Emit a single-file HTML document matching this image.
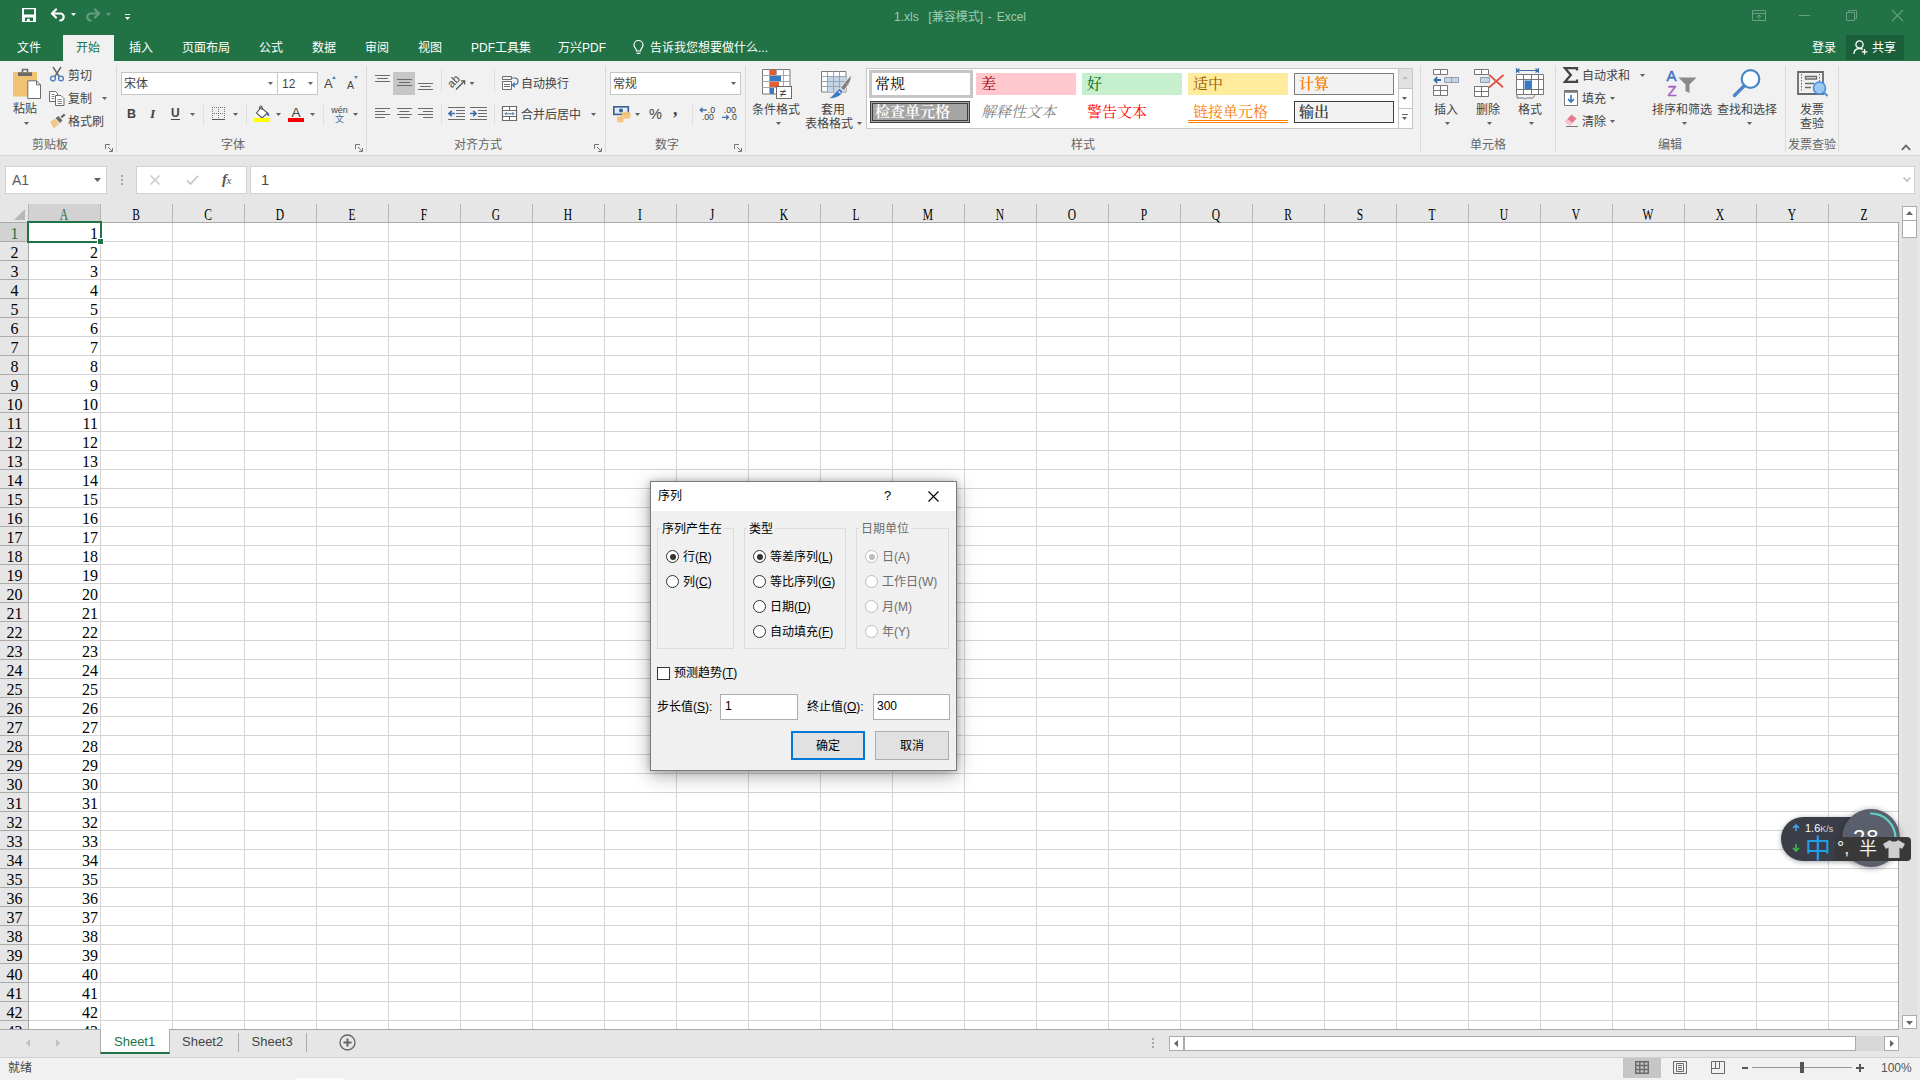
<!DOCTYPE html>
<html lang="zh-CN"><head><meta charset="utf-8"><title>1.xls [兼容模式] - Excel</title>
<style>
*{box-sizing:border-box;margin:0;padding:0}
html,body{width:1920px;height:1080px;overflow:hidden;background:#fff}
body{position:relative;font-family:"Liberation Sans","Noto Sans CJK SC",sans-serif;font-size:12px;color:#444;line-height:1}
.a{position:absolute}
.t{position:absolute;white-space:nowrap;line-height:16px;height:16px}
.c{text-align:center}
.r{line-height:18px;height:18px}
svg{position:absolute;overflow:visible}
#title{left:0;top:0;width:1920px;height:60.500px;background:#217346;z-index:1}
#ribbon{left:0;top:60px;width:1920px;height:96px;background:#f1f1f1;border-bottom:1px solid #d5d5d5}
#fbar{left:0;top:156px;width:1920px;height:48px;background:#e6e6e6}
.tab{color:#fff;top:39.500px}
.gl{color:#666;top:136px}
.sep{position:absolute;top:66px;width:1px;height:86px;background:#dadada}
.sep2{position:absolute;width:1px;height:22px;background:#e0e0e0}
.dd{position:absolute;width:5px;height:3px;background:#606060;clip-path:polygon(0 0,100% 0,50% 100%)}
.ser{font-family:"Liberation Serif","Noto Serif CJK SC",serif}
.sty{position:absolute;height:22px;font-family:"Liberation Serif","Noto Serif CJK SC",serif;font-size:15px;line-height:22px;padding-left:5px;white-space:nowrap}
.rh{position:absolute;left:0;width:29px;height:19px;text-align:center;font:16px/21px "Liberation Serif","Noto Serif CJK SC",serif;color:#000}
.cv{position:absolute;left:30px;width:68px;height:19px;text-align:right;font:16px/21px "Liberation Serif","Noto Serif CJK SC",serif;color:#000}
.ch{position:absolute;top:204px;width:72px;height:18px;text-align:center;transform:scaleX(.72);font:16px/21px "Liberation Serif","Noto Serif CJK SC",serif;color:#000}
.vsep{position:absolute;top:204px;width:1px;height:18px;background:#b5b5b5}
#dlg{left:650px;top:481px;width:307px;height:290px;background:#f0f0f0;border:1px solid #7a7a7a;box-shadow:0 4px 18px rgba(0,0,0,.35),0 0 6px rgba(0,0,0,.2);color:#000}
#dlg .t{color:#000}
.gb{position:absolute;border:1px solid #dcdcdc;top:46px;height:121px}
.gt{position:absolute;top:39px;background:#f0f0f0;padding:0 2px;line-height:16px;height:16px;white-space:nowrap}
.rd{position:absolute;width:13px;height:13px;border-radius:50%;border:1px solid #333;background:#fff}
.rd.on::after{content:"";position:absolute;left:2.500px;top:2.500px;width:6px;height:6px;border-radius:50%;background:#333}
.rd.dis{border-color:#bcbcbc}
.rd.dis.on::after{background:#bcbcbc}
u{text-decoration:underline;text-underline-offset:1px}
</style></head><body>
<div class="a" id="title">
<!-- QAT icons -->
<svg style="left:22px;top:8px" width="14" height="14" viewBox="0 0 14 14"><path fill="#fff" fill-rule="evenodd" d="M0 0h14v14H0zM2 1.200v5.300h10V1.200zM3 9.500V13h8V9.500z"/><path fill="#fff" d="M5 10.800h2.800V13H5z"/></svg>
<svg style="left:50px;top:7px" width="16" height="15" viewBox="0 0 16 15" fill="none" stroke="#fff" stroke-width="2.200"><path d="M2.500 6.500H10.200A3.500 3.500 0 0 1 10.200 13.500" stroke-linecap="round"/><path d="M6 2.500L2 6.500 6 10.500" stroke-linecap="round" stroke-linejoin="round"/></svg>
<div class="dd" style="left:71px;top:13px;background:#fff"></div>
<svg style="left:85px;top:7px;opacity:.3" width="16" height="15" viewBox="0 0 16 15" fill="none" stroke="#fff" stroke-width="2.200"><path d="M13.500 6.500H5.800A3.500 3.500 0 0 0 5.800 13.500" stroke-linecap="round"/><path d="M10 2.500L14 6.500 10 10.500" stroke-linecap="round" stroke-linejoin="round"/></svg>
<div class="dd" style="left:106px;top:13px;background:#fff;opacity:.3"></div>
<div class="a" style="left:125px;top:14px;width:5px;height:1px;background:#fff"></div>
<div class="dd" style="left:125px;top:17px;background:#fff"></div>
<div class="t" style="left:894px;top:9px;color:#9fcbb0;word-spacing:1.500px">1.xls &nbsp;[兼容模式] - Excel</div>
<!-- window controls -->
<svg style="left:1752px;top:10px;opacity:.32" width="14" height="11" viewBox="0 0 14 11" fill="none" stroke="#fff" stroke-width="1"><path d="M.5.5h13v10H.5z"/><path d="M.5 3.500h13"/><path d="M7 5v4M5 7l2-2 2 2"/></svg>
<div class="a" style="left:1799px;top:15px;width:11px;height:1px;background:#fff;opacity:.32"></div>
<svg style="left:1846px;top:10px;opacity:.32" width="11" height="11" viewBox="0 0 11 11" fill="none" stroke="#fff" stroke-width="1"><path d="M.5 2.500h8v8h-8z"/><path d="M2.500 2.500v-2h8v8h-2"/></svg>
<svg style="left:1892px;top:10px;opacity:.32" width="11" height="11" viewBox="0 0 11 11" fill="none" stroke="#fff" stroke-width="1.1"><path d="M0 0l11 11M11 0L0 11"/></svg>
<!-- tabs -->
<div class="a" style="left:63px;top:35px;width:51px;height:27px;background:#f1f1f1"></div>
<div class="t tab" style="left:17px">文件</div>
<div class="t tab" style="left:76px;color:#217346">开始</div>
<div class="t tab" style="left:129px">插入</div>
<div class="t tab" style="left:182px">页面布局</div>
<div class="t tab" style="left:259px">公式</div>
<div class="t tab" style="left:312px">数据</div>
<div class="t tab" style="left:365px">审阅</div>
<div class="t tab" style="left:418px">视图</div>
<div class="t tab" style="left:471px">PDF工具集</div>
<div class="t tab" style="left:558px">万兴PDF</div>
<svg style="left:633px;top:40px" width="11" height="15" viewBox="0 0 11 15" fill="none" stroke="#fff" stroke-width="1.200"><path d="M3.500 11C3.500 8.500 1 7.800 1 5a4.500 4.500 0 0 1 9 0c0 2.800-2.500 3.500-2.500 6z"/><path d="M3.500 13.300h4"/></svg>
<div class="t tab" style="left:650px">告诉我您想要做什么...</div>
<div class="t tab" style="left:1812px">登录</div>
<div class="a" style="left:1846px;top:35px;width:58px;height:25px;background:#1a5f3a"></div>
<svg style="left:1853px;top:40px" width="15" height="15" viewBox="0 0 15 15" fill="none" stroke="#fff" stroke-width="1.3"><circle cx="6.500" cy="4.500" r="3.600"/><path d="M.8 14c.4-3.500 2.800-5.500 5.700-5.500 1.200 0 2.300.3 3.200.9"/><path d="M11.500 9v5.500M8.800 11.800h5.500"/></svg>
<div class="t tab" style="left:1872px">共享</div>
</div>
<div class="a" id="ribbon"></div>
<!-- ===== clipboard ===== -->
<svg style="left:12px;top:68px" width="30" height="32" viewBox="0 0 30 32"><rect x="1" y="4" width="24" height="24.500" fill="#f0c372"/><rect x="6" y="4.300" width="14" height="3.700" fill="#6b6b6b"/><path d="M10.500 4.500v-3h5v3" fill="none" stroke="#6b6b6b" stroke-width="1.600"/><path d="M15.800 12.800h8.700l4 4v13.700H15.800z" fill="#fff" stroke="#6b6b6b"/><path d="M24.500 12.800v4h4" fill="none" stroke="#6b6b6b"/></svg>
<div class="t r" style="left:13px;top:100px">粘贴</div>
<div class="dd" style="left:24px;top:122px"></div>
<svg style="left:49px;top:66px" width="16" height="16" viewBox="0 0 16 16" fill="none"><path d="M4 1l6.500 10M12 1L5.500 11" stroke="#6b6b6b" stroke-width="1.500"/><circle cx="4" cy="12.500" r="2.400" stroke="#4a7ebb" stroke-width="1.300"/><circle cx="12" cy="12.500" r="2.400" stroke="#4a7ebb" stroke-width="1.300"/></svg>
<div class="t r" style="left:68px;top:67px">剪切</div>
<svg style="left:49px;top:90px" width="16" height="16" viewBox="0 0 16 16" fill="#fff" stroke="#6b6b6b"><path d="M.500 1.500h6l2 2v8h-8z"/><path d="M2.500 4.500h3M2.500 6.500h3M2.500 8.500h3" stroke-width=".8"/><path d="M6.500 5.500h5.500l3 3v7h-8.500z"/><path d="M8.500 9.500h4.500M8.500 11.500h4.500M8.500 13.500h4.500" stroke-width=".8"/></svg>
<div class="t r" style="left:68px;top:90px">复制</div>
<div class="dd" style="left:102px;top:97px"></div>
<svg style="left:49px;top:113px" width="17" height="16" viewBox="0 0 17 16"><path d="M1 9l5-3.500 4.500 5L5 15.500z" fill="#f0c789"/><path d="M6.500 5l3-2 4 4.500-2.500 2.500z" fill="#6b6b6b"/><path d="M11.500 3.500l3.500-3 1.500 1.800-3.500 3z" fill="#6b6b6b"/></svg>
<div class="t r" style="left:68px;top:113px">格式刷</div>
<div class="t gl r" style="left:32px">剪贴板</div>
<svg style="left:105px;top:144px" width="8" height="8" viewBox="0 0 8 8" fill="none" stroke="#777" stroke-width="1"><path d="M.500 5V.500H5"/><path d="M3 3l4 4M7.500 4v3.500H4"/></svg>
<div class="sep" style="left:116px"></div>
<!-- ===== font ===== -->
<div class="a" style="left:121px;top:72px;width:157px;height:23px;background:#fff;border:1px solid #c6c6c6"></div>
<div class="t r" style="left:124px;top:75px">宋体</div>
<div class="dd" style="left:268px;top:82px"></div>
<div class="a" style="left:277px;top:72px;width:41px;height:23px;background:#fff;border:1px solid #c6c6c6"></div>
<div class="t r" style="left:282px;top:75px;font-size:12px">12</div>
<div class="dd" style="left:308px;top:82px"></div>
<div class="t r" style="left:324px;top:75px;font-size:13px">A</div>
<div class="a" style="left:332px;top:76px;width:0;height:0;border-left:2.500px solid transparent;border-right:2.500px solid transparent;border-bottom:3px solid #5b86b0"></div>
<div class="t r" style="left:347px;top:76px;font-size:10.500px">A</div>
<div class="a" style="left:354px;top:76px;width:0;height:0;border-left:2.500px solid transparent;border-right:2.500px solid transparent;border-top:3px solid #5b86b0"></div>
<div class="t r" style="left:127px;top:105px;font-size:12.500px;font-weight:bold">B</div>
<div class="t r" style="left:150px;top:105px;font-size:13.500px;font-style:italic;font-weight:bold;font-family:'Liberation Serif',serif">I</div>
<div class="t r" style="left:171px;top:104px;font-size:12px;font-weight:bold">U</div><div class="a" style="left:171px;top:119px;width:9px;height:1px;background:#444"></div>
<div class="dd" style="left:190px;top:113px"></div>
<div class="sep2" style="left:203px;top:103px"></div>
<svg style="left:212px;top:107px" width="13" height="14" viewBox="0 0 13 14" fill="none" stroke="#777" stroke-dasharray="1 1" shape-rendering="crispEdges"><path d="M0 .500h13M0 6.500h13M.500 0v12M6.500 0v12M12.500 0v12"/><path d="M0 12.500h13" stroke-dasharray="none" stroke="#555"/></svg>
<div class="dd" style="left:233px;top:113px"></div>
<div class="sep2" style="left:246px;top:103px"></div>
<svg style="left:254px;top:105px" width="17" height="18" viewBox="0 0 17 18" fill="none"><path d="M7 2.500l6.500 5.500-5.500 5L2.500 8z" fill="#fff" stroke="#555" stroke-width="1.100"/><path d="M5.500 5V2.200a1.300 1.300 0 0 1 2.600 0V5" stroke="#555"/><path d="M13.500 7c1.500 1.500 2 3 1.700 4.500-.8-.8-1.700-1.500-2.700-2z" fill="#3b5fa8"/><rect x="0" y="13" width="16" height="4" fill="#ffff00"/></svg>
<div class="dd" style="left:276px;top:113px"></div>
<div class="t r" style="left:288px;top:104px;font-size:13.500px;width:16px;text-align:center">A</div>
<div class="a" style="left:288px;top:118px;width:16px;height:4px;background:#f20000"></div>
<div class="dd" style="left:310px;top:113px"></div>
<div class="sep2" style="left:323px;top:103px"></div>
<div class="t c" style="left:329px;top:105px;width:21px;font-size:9px;line-height:10px;height:10px">wén</div>
<div class="t c" style="left:329px;top:114px;width:21px;font-size:9px;line-height:10px;height:10px;color:#3d6fa8">文</div>
<div class="dd" style="left:353px;top:113px"></div>
<div class="t gl r" style="left:221px">字体</div>
<svg style="left:355px;top:144px" width="8" height="8" viewBox="0 0 8 8" fill="none" stroke="#777" stroke-width="1"><path d="M.500 5V.500H5"/><path d="M3 3l4 4M7.500 4v3.500H4"/></svg>
<div class="sep" style="left:366px"></div>
<!-- ===== alignment ===== -->
<div class="a" style="left:393px;top:72px;width:22px;height:23px;background:#c6c6c6"></div>
<svg style="left:375px;top:74px" width="60" height="20" viewBox="0 0 60 20" stroke="#6b6b6b" fill="none"><path d="M0 1.500h15M2 4.500h11M0 7.500h15"/><path d="M22 5.500h15M24 8.500h11M22 11.500h15"/><path d="M43 9.500h15M45 12.500h11M43 15.500h15"/></svg>
<svg style="left:375px;top:107px" width="60" height="14" viewBox="0 0 60 14" stroke="#6b6b6b" fill="none"><path d="M0 1.500h15M0 4.500h10M0 7.500h15M0 10.500h10"/><path d="M22 1.500h15M24.500 4.500h10M22 7.500h15M24.500 10.500h10"/><path d="M43 1.500h15M48 4.500h10M43 7.500h15M48 10.500h10"/></svg>
<div class="sep2" style="left:441px;top:70px"></div>
<div class="sep2" style="left:441px;top:103px"></div>
<svg style="left:448px;top:75px" width="18" height="16" viewBox="0 0 18 16" fill="none"><text x="0" y="0" font-size="11.500" fill="#4a4a4a" transform="translate(3.700 13.600) rotate(-45)" font-family="Liberation Sans, sans-serif">ab</text><path d="M8 14.500L16.500 6M13 5.800h3.700v3.700" stroke="#555" stroke-width="1.200"/></svg>
<div class="dd" style="left:469.5px;top:82px"></div>
<svg style="left:448px;top:107px" width="40" height="14" viewBox="0 0 40 14" fill="none" stroke="#6b6b6b"><path d="M0 .500h17M8 3.500h9M8 6.500h9M8 9.500h9M0 12.500h17"/><path d="M1 6.500h6M3.800 3.800L1 6.500l2.800 2.700" stroke="#3d6fa8" stroke-width="1.700"/><path d="M22 .500h17M30 3.500h9M30 6.500h9M30 9.500h9M22 12.500h17"/><path d="M22 6.500h6M25.200 3.800L28 6.500l-2.800 2.700" stroke="#3d6fa8" stroke-width="1.700"/></svg>
<div class="sep2" style="left:494px;top:70px"></div>
<div class="sep2" style="left:494px;top:103px"></div>
<svg style="left:502px;top:75px" width="17" height="16" viewBox="0 0 17 16" fill="none" stroke="#6b6b6b"><path d="M.500 1.500h9v3h-9zM9.500 3h3"/><path d="M.500 6.500h9v8h-9zM2 9.500h6M2 11.500h6" fill="#fff"/><path d="M12.500 3c3 0 3.500 2 3.500 3.500 0 2.500-2 3.500-5 3.500M12.800 7.800L10.500 10l2.300 2.200" stroke="#3d6fa8" stroke-width="1.200"/></svg>
<div class="t r" style="left:521px;top:75px">自动换行</div>
<svg style="left:502px;top:106px" width="15" height="15" viewBox="0 0 15 15" fill="none" stroke="#6b6b6b"><path d="M.500 .500h14v14h-14z" fill="#fff" stroke-width="1.200"/><path d="M.500 4.500h14M.500 10.500h14M7.500 .500v4M7.500 10.500v4"/><path d="M3 7.750h9M4.500 6.200L3 7.750 4.500 9.300M10.500 6.200L12 7.750 10.500 9.300" stroke="#3d6fa8"/></svg>
<div class="t r" style="left:521px;top:106px">合并后居中</div>
<div class="dd" style="left:591px;top:113px"></div>
<div class="t gl r" style="left:454px">对齐方式</div>
<svg style="left:594px;top:144px" width="8" height="8" viewBox="0 0 8 8" fill="none" stroke="#777" stroke-width="1"><path d="M.500 5V.500H5"/><path d="M3 3l4 4M7.500 4v3.500H4"/></svg>
<div class="sep" style="left:605px"></div>
<!-- ===== number ===== -->
<div class="a" style="left:610px;top:72px;width:131px;height:23px;background:#fff;border:1px solid #c6c6c6"></div>
<div class="t r" style="left:613px;top:75px">常规</div>
<div class="dd" style="left:731px;top:82px"></div>
<svg style="left:612px;top:105px" width="20" height="18" viewBox="0 0 20 18" fill="none"><rect x="1.800" y="1.800" width="14.500" height="7.600" fill="#dce9f7" stroke="#3b5f8f" stroke-width="1.600"/><circle cx="9" cy="5.500" r="2" fill="#3b5f8f"/><g fill="#f3b867" stroke="#fbe3c0" stroke-width=".5"><ellipse cx="14.200" cy="12" rx="4.300" ry="1.500"/><ellipse cx="14.200" cy="10.300" rx="4.300" ry="1.500"/><ellipse cx="14.200" cy="8.600" rx="4.300" ry="1.500"/><ellipse cx="8.300" cy="16" rx="3.400" ry="1.300"/><ellipse cx="8.300" cy="14.400" rx="3.400" ry="1.300"/><ellipse cx="8.300" cy="12.800" rx="3.400" ry="1.300"/></g></svg>
<div class="dd" style="left:635px;top:113px"></div>
<div class="t r" style="left:649px;top:105px;font-size:14.500px">%</div>
<div class="t r" style="left:673px;top:99.500px;font-size:18px;font-weight:bold;font-family:'Liberation Serif',serif">,</div>
<div class="sep2" style="left:692px;top:103px"></div>
<svg style="left:698px;top:106px" width="40" height="16" viewBox="0 0 40 16" fill="#3a3a3a" font-family="Liberation Sans, sans-serif" font-size="8.700"><path d="M2.200 4h6.500M4.500 1.800L2.200 4l2.300 2.200" stroke="#3d6fa8" fill="none" stroke-width="1.300"/><text x="9.800" y="6.500">.0</text><text x="3.800" y="14.200">.00</text><text x="25.800" y="6.500">.00</text><path d="M24 11.300h6.500M28.200 9.100l2.300 2.200-2.300 2.200" stroke="#3d6fa8" fill="none" stroke-width="1.300"/><text x="31.500" y="14.200">.0</text></svg>
<div class="t gl r" style="left:655px">数字</div>
<svg style="left:734px;top:144px" width="8" height="8" viewBox="0 0 8 8" fill="none" stroke="#777" stroke-width="1"><path d="M.500 5V.500H5"/><path d="M3 3l4 4M7.500 4v3.500H4"/></svg>
<div class="sep" style="left:745px"></div>
<!-- ===== styles ===== -->
<svg style="left:762px;top:69px" width="31" height="31" viewBox="0 0 31 31" fill="none"><path d="M.500 .500h27.500v24.500H.500z" fill="#fff" stroke="#7a7a7a"/><path d="M.500 6.500h27.500M.500 12.500h27.500M.500 18.500h27.500M7.500 .500v24.500M14.500 .500v24.500M21.500 .500v24.500" stroke="#a8a8a8"/><rect x="8" y="1" width="6" height="5" fill="#e85a30"/><rect x="8" y="7" width="11" height="5" fill="#3b78c3"/><rect x="8" y="13" width="9" height="5" fill="#e85a30"/><rect x="8" y="19" width="4" height="6" fill="#3b78c3"/><rect x="14.500" y="17.500" width="15" height="12" fill="#fff" stroke="#6b6b6b"/><text x="17.800" y="28" font-size="12" fill="#444" font-family="Liberation Sans, sans-serif">≠</text></svg>
<div class="t r" style="left:752px;top:101px">条件格式</div>
<div class="dd" style="left:776px;top:122px"></div>
<svg style="left:821px;top:71px" width="31" height="29" viewBox="0 0 31 29" fill="none"><path d="M.500 .500h24.500v20.500H.500z" fill="#fff" stroke="#7a7a7a"/><rect x="6.500" y="5.500" width="18.500" height="15.500" fill="#c5d5e8"/><path d="M.500 5.500h24.500M.500 10.500h24.500M.500 15.500h24.500M6.500 .500v20.500M12.500 .500v20.500M18.500 .500v20.500" stroke="#9aa4b0"/><path d="M30 4.500c.8 4-1.500 8-7 15l-3.500-2.500c4-5.500 7-9 10.500-12.500z" fill="#7f7f7f" stroke="#f1f1f1" stroke-width=".8"/><path d="M24.500 12.500l3 2" stroke="#a0a0a0" stroke-width="1"/><path d="M18.500 17.500l3.500 2.500c-1.500 5-7 8-15 7.500 5-2 6.500-6.500 11.500-10z" fill="#3b78c3" stroke="#f1f1f1" stroke-width=".8"/><path d="M17.500 20.500l2 1.500" stroke="#fff" stroke-width="1.200"/></svg>
<div class="t r" style="left:821px;top:101px">套用</div>
<div class="t r" style="left:805px;top:115px">表格格式</div>
<div class="dd" style="left:857px;top:122px"></div>
<div class="a" style="left:866px;top:68px;width:547px;height:61px;background:#fff;border:1px solid #c6c6c6"></div>
<div class="sty" style="left:869px;top:70px;width:104px;height:28px;border:3px solid #c6c6c6;color:#000;padding-left:3px;background:#fff;line-height:23px">常规</div>
<div class="sty" style="left:976px;top:73px;width:100px;background:#ffc7ce;color:#9c0006">差</div>
<div class="sty" style="left:1082px;top:73px;width:100px;background:#c6efce;color:#006100">好</div>
<div class="sty" style="left:1188px;top:73px;width:100px;background:#ffeb9c;color:#9c5700">适中</div>
<div class="sty" style="left:1294px;top:73px;width:100px;background:#f2f2f2;color:#fa7d00;border:1px solid #7f7f7f;line-height:20px;padding-left:4px;font-weight:600">计算</div>
<div class="sty" style="left:870px;top:101px;width:100px;background:#a5a5a5;color:#fff;font-weight:600;border:3px double #3f3f3f;line-height:17px;padding-left:2px">检查单元格</div>
<div class="sty" style="left:976px;top:101px;width:100px;color:#7f7f7f;font-style:italic">解释性文本</div>
<div class="sty" style="left:1082px;top:101px;width:100px;color:#ff0000">警告文本</div>
<div class="sty" style="left:1188px;top:101px;width:100px;color:#fa7d00;border-bottom:3px double #ff8001">链接单元格</div>
<div class="sty" style="left:1294px;top:101px;width:100px;background:#f2f2f2;color:#3f3f3f;font-weight:600;border:1px solid #3f3f3f;line-height:20px;padding-left:4px">输出</div>
<div class="a" style="left:1398px;top:68px;width:15px;height:21px;background:#e1e1e1;border:1px solid #c6c6c6"></div>
<div class="a" style="left:1398px;top:88px;width:15px;height:21px;background:#fdfdfd;border:1px solid #c6c6c6"></div>
<div class="a" style="left:1398px;top:108px;width:15px;height:21px;background:#fdfdfd;border:1px solid #c6c6c6"></div>
<div class="a" style="left:1402px;top:76px;width:0;height:0;border-left:3px solid transparent;border-right:3px solid transparent;border-bottom:3px solid #c0c0c0"></div>
<div class="dd" style="left:1402px;top:97px"></div>
<div class="a" style="left:1402px;top:114px;width:6px;height:1px;background:#666"></div>
<div class="dd" style="left:1402px;top:117px"></div>
<div class="t gl r" style="left:1071px">样式</div>
<div class="sep" style="left:1420px"></div>
<!-- ===== cells ===== -->
<svg style="left:1433px;top:69px" width="28" height="28" viewBox="0 0 28 28" fill="none" stroke="#777"><path d="M.500 .500h14v5h-14zM7.500.500v5" fill="#fff"/><path d="M.500 16.500h14v10h-14zM7.500 16.500v10M.500 21.500h14" fill="#fff"/><path d="M11.500 8.500h14v5h-14zM18.500 8.500v5" fill="#c8d3e4" stroke="#8d9db8"/><path d="M1.500 11h6.500M4.300 8.200L1.500 11l2.800 2.800" stroke="#3d6fa8" stroke-width="1.800"/></svg>
<div class="t r" style="left:1434px;top:101px">插入</div>
<div class="dd" style="left:1445px;top:122px"></div>
<svg style="left:1474px;top:69px" width="30" height="29" viewBox="0 0 30 29" fill="none" stroke="#777"><path d="M.500 .500h14v5h-14zM7.500.500v5" fill="#fff"/><path d="M.500 17.500h14v10h-14zM7.500 17.500v10M.500 22.500h14" fill="#fff"/><path d="M6.500 8.500h9v5h-9z" fill="#c8d3e4" stroke="#8d9db8"/><path d="M15 5.800l14 12.500M29.500 6L15 18.500" stroke="#e2574c" stroke-width="1.900"/></svg>
<div class="t r" style="left:1476px;top:101px">删除</div>
<div class="dd" style="left:1487px;top:122px"></div>
<svg style="left:1515px;top:67px" width="31" height="33" viewBox="0 0 31 33" fill="none" stroke="#777"><path d="M2 3.500h21M1.500 1v5M23.500 1v5M4.500 1.500l-2.500 2 2.500 2M20.500 1.500l2.500 2-2.500 2" stroke="#3d6fa8" stroke-width="1.100"/><path d="M1.500 7.500h27v20h-27z" fill="#fff"/><path d="M1.500 12.500h27M1.500 22.500h27M8.500 7.500v20M16.500 7.500v20M23.500 7.500v20"/><rect x="9.500" y="13.500" width="6.500" height="8.500" fill="#3b78c3" stroke="none"/><path d="M2 27.500v3.500h6.500l1.500 1 1.500-1H17c1.500 0 2.500-1.500 2.500-3.500"/></svg>
<div class="t r" style="left:1518px;top:101px">格式</div>
<div class="dd" style="left:1529px;top:122px"></div>
<div class="t gl r" style="left:1470px">单元格</div>
<div class="sep" style="left:1555px"></div>
<!-- ===== editing ===== -->
<svg style="left:1563px;top:67px" width="15" height="16" viewBox="0 0 15 16" fill="none" stroke="#444" stroke-width="2.300"><path d="M14 3.500V1.200H2l5.800 6.800L2 14.800h12v-2.300" stroke-linejoin="miter"/></svg>
<div class="t r" style="left:1582px;top:67px">自动求和</div>
<div class="dd" style="left:1640px;top:74px"></div>
<svg style="left:1564px;top:90px" width="14" height="16" viewBox="0 0 14 16" fill="none"><path d="M.500 .500h13v15h-13z" fill="#fff" stroke="#777"/><path d="M.500 1.500h13" stroke="#777" stroke-width="2.500"/><path d="M7 5v7M4 9l3 3 3-3" stroke="#2e75b6" stroke-width="1.600"/></svg>
<div class="t r" style="left:1582px;top:90px">填充</div>
<div class="dd" style="left:1610px;top:97px"></div>
<svg style="left:1563px;top:113px" width="16" height="15" viewBox="0 0 16 15" fill="none"><path d="M2 8.500l6.500-7 5 4-6.500 7z" fill="#e8788a"/><path d="M2 8.500l2.500-2.500 5 4-2.500 2.500z" fill="#f5c5cc"/><path d="M3 13.500h12" stroke="#777"/></svg>
<div class="t r" style="left:1582px;top:113px">清除</div>
<div class="dd" style="left:1610px;top:120px"></div>
<svg style="left:1666px;top:68px" width="32" height="30" viewBox="0 0 32 30" fill="none"><text x="0.500" y="13.300" font-size="15" font-family="Liberation Sans, sans-serif" fill="#4472c4" stroke="#4472c4" stroke-width=".5">A</text><text x="1.500" y="28" font-size="15" font-family="Liberation Sans, sans-serif" fill="#a565c5" stroke="#a565c5" stroke-width=".5">Z</text><path d="M12.500 9.500h18l-7 7v8.500l-4-2v-6.500z" fill="#8a8a8a"/></svg>
<div class="t r" style="left:1652px;top:101px">排序和筛选</div>
<div class="dd" style="left:1682px;top:122px"></div>
<svg style="left:1732px;top:68px" width="30" height="30" viewBox="0 0 30 30" fill="none"><circle cx="18.500" cy="11" r="8.800" fill="#fbfdff" stroke="#4a86c5" stroke-width="2.200"/><path d="M12 18L2.500 27.500" stroke="#4a86c5" stroke-width="3.400" stroke-linecap="round"/></svg>
<div class="t r" style="left:1717px;top:101px">查找和选择</div>
<div class="dd" style="left:1747px;top:122px"></div>
<div class="t gl r" style="left:1658px">编辑</div>
<div class="sep" style="left:1785px"></div>
<!-- ===== invoice ===== -->
<svg style="left:1797px;top:71px" width="32" height="28" viewBox="0 0 32 28" fill="none" stroke="#6b6b6b"><path d="M1 1h25v22H1z" stroke-width="1.800"/><path d="M4.500 3v18M22.500 3v18" stroke-dasharray="1.500 1.500"/><path d="M8.500 5.500h11v2.500h-11zM8 12.500h9M8 16.500h6" stroke-width="1.300"/><circle cx="22.500" cy="17" r="6" fill="#9cc8f0" stroke="#4a90d9" stroke-width="1.600"/><path d="M27 21.500l3.500 3.500" stroke="#4a90d9" stroke-width="2"/></svg>
<div class="t r" style="left:1800px;top:101px">发票</div>
<div class="t r" style="left:1800px;top:115px">查验</div>
<div class="t gl r" style="left:1788px">发票查验</div>
<div class="sep" style="left:1838px"></div>
<svg style="left:1901px;top:144px" width="10" height="6" viewBox="0 0 10 6" fill="none" stroke="#666" stroke-width="1.800"><path d="M.800 5.800L5 1.600l4.200 4.200"/></svg>
<!-- ===== formula bar ===== -->
<div class="a" id="fbar"></div>
<div class="a" style="left:5px;top:166px;width:102px;height:28px;background:#fff;border:1px solid #d2d2d2"></div>
<div class="t" style="left:12px;top:172px;font-size:14px;color:#5a5a5a">A1</div>
<div class="dd" style="left:94px;top:178px;width:7px;height:4px"></div>
<div class="a" style="left:121px;top:175px;width:2px;height:2px;background:#a6a6a6;box-shadow:0 4px 0 #a6a6a6,0 8px 0 #a6a6a6"></div>
<div class="a" style="left:136px;top:166px;width:111px;height:28px;background:#fff;border:1px solid #d2d2d2"></div>
<svg style="left:150px;top:175px" width="10" height="10" viewBox="0 0 10 10" fill="none" stroke="#c8c8c8" stroke-width="1.400"><path d="M.500 .500l9 9M9.500.500l-9 9"/></svg>
<svg style="left:186px;top:175px" width="13" height="10" viewBox="0 0 13 10" fill="none" stroke="#c8c8c8" stroke-width="1.800"><path d="M1 5.500l3.500 3.500L12 .800"/></svg>
<div class="t" style="left:222px;top:171px;font-size:15px;font-style:italic;font-family:'Liberation Serif',serif;color:#555;letter-spacing:-.5px"><b>f</b><span style="font-size:11px">x</span></div>
<div class="a" style="left:250px;top:166px;width:1665px;height:28px;background:#fff;border:1px solid #d2d2d2"></div>
<div class="t" style="left:261px;top:172px;font-size:14.500px">1</div>
<svg style="left:1903px;top:177px" width="8" height="5" viewBox="0 0 8 5" fill="none" stroke="#bbb" stroke-width="1.600"><path d="M.500 .500L4 4 7.500 .500"/></svg>
<!-- ===== grid ===== -->
<div class="a" style="left:0;top:204px;width:1920px;height:19px;background:#e6e6e6"></div>
<div class="a" style="left:0;top:222px;width:1900px;height:1px;background:#ababab"></div>
<div class="a" style="left:0;top:223px;width:29px;height:806px;background:#e6e6e6;border-right:1px solid #a6a6a6"></div>
<div class="a" style="left:29px;top:223px;width:1871px;height:806px;background-image:repeating-linear-gradient(to right,transparent 0,transparent 71px,#d4d4d4 71px,#d4d4d4 72px),repeating-linear-gradient(to bottom,transparent 0,transparent 18px,#d4d4d4 18px,#d4d4d4 19px);background-position:0 0,0 0"></div>
<div class="a" style="left:0;top:223px;width:28px;height:806px;background-image:repeating-linear-gradient(to bottom,transparent 0,transparent 18px,#ababab 18px,#ababab 19px)"></div>
<svg style="left:14px;top:209px" width="11" height="11" viewBox="0 0 11 11"><path d="M11 0v11H0z" fill="#b7b7b7"/></svg>
<div class="a" style="left:29px;top:204px;width:72px;height:18px;background:#d2d2d2"></div>
<div class="a" style="left:29px;top:221px;width:72px;height:2px;background:#217346"></div>
<div class="ch" style="left:28px;color:#217346">A</div>
<div class="vsep" style="left:100px"></div>
<div class="ch" style="left:100px">B</div>
<div class="vsep" style="left:172px"></div>
<div class="ch" style="left:172px">C</div>
<div class="vsep" style="left:244px"></div>
<div class="ch" style="left:244px">D</div>
<div class="vsep" style="left:316px"></div>
<div class="ch" style="left:316px">E</div>
<div class="vsep" style="left:388px"></div>
<div class="ch" style="left:388px">F</div>
<div class="vsep" style="left:460px"></div>
<div class="ch" style="left:460px">G</div>
<div class="vsep" style="left:532px"></div>
<div class="ch" style="left:532px">H</div>
<div class="vsep" style="left:604px"></div>
<div class="ch" style="left:604px">I</div>
<div class="vsep" style="left:676px"></div>
<div class="ch" style="left:676px">J</div>
<div class="vsep" style="left:748px"></div>
<div class="ch" style="left:748px">K</div>
<div class="vsep" style="left:820px"></div>
<div class="ch" style="left:820px">L</div>
<div class="vsep" style="left:892px"></div>
<div class="ch" style="left:892px">M</div>
<div class="vsep" style="left:964px"></div>
<div class="ch" style="left:964px">N</div>
<div class="vsep" style="left:1036px"></div>
<div class="ch" style="left:1036px">O</div>
<div class="vsep" style="left:1108px"></div>
<div class="ch" style="left:1108px">P</div>
<div class="vsep" style="left:1180px"></div>
<div class="ch" style="left:1180px">Q</div>
<div class="vsep" style="left:1252px"></div>
<div class="ch" style="left:1252px">R</div>
<div class="vsep" style="left:1324px"></div>
<div class="ch" style="left:1324px">S</div>
<div class="vsep" style="left:1396px"></div>
<div class="ch" style="left:1396px">T</div>
<div class="vsep" style="left:1468px"></div>
<div class="ch" style="left:1468px">U</div>
<div class="vsep" style="left:1540px"></div>
<div class="ch" style="left:1540px">V</div>
<div class="vsep" style="left:1612px"></div>
<div class="ch" style="left:1612px">W</div>
<div class="vsep" style="left:1684px"></div>
<div class="ch" style="left:1684px">X</div>
<div class="vsep" style="left:1756px"></div>
<div class="ch" style="left:1756px">Y</div>
<div class="vsep" style="left:1828px"></div>
<div class="ch" style="left:1828px">Z</div>
<div class="vsep" style="left:1900px"></div>
<div class="vsep" style="left:28px"></div>
<div class="a" style="left:0;top:223px;width:27px;height:18px;background:#d2d2d2"></div>
<div class="a" style="left:27px;top:223px;width:2px;height:19px;background:#217346"></div>
<div class="rh" style="top:223px;color:#217346">1</div>
<div class="cv" style="top:223px">1</div>
<div class="rh" style="top:242px">2</div>
<div class="cv" style="top:242px">2</div>
<div class="rh" style="top:261px">3</div>
<div class="cv" style="top:261px">3</div>
<div class="rh" style="top:280px">4</div>
<div class="cv" style="top:280px">4</div>
<div class="rh" style="top:299px">5</div>
<div class="cv" style="top:299px">5</div>
<div class="rh" style="top:318px">6</div>
<div class="cv" style="top:318px">6</div>
<div class="rh" style="top:337px">7</div>
<div class="cv" style="top:337px">7</div>
<div class="rh" style="top:356px">8</div>
<div class="cv" style="top:356px">8</div>
<div class="rh" style="top:375px">9</div>
<div class="cv" style="top:375px">9</div>
<div class="rh" style="top:394px">10</div>
<div class="cv" style="top:394px">10</div>
<div class="rh" style="top:413px">11</div>
<div class="cv" style="top:413px">11</div>
<div class="rh" style="top:432px">12</div>
<div class="cv" style="top:432px">12</div>
<div class="rh" style="top:451px">13</div>
<div class="cv" style="top:451px">13</div>
<div class="rh" style="top:470px">14</div>
<div class="cv" style="top:470px">14</div>
<div class="rh" style="top:489px">15</div>
<div class="cv" style="top:489px">15</div>
<div class="rh" style="top:508px">16</div>
<div class="cv" style="top:508px">16</div>
<div class="rh" style="top:527px">17</div>
<div class="cv" style="top:527px">17</div>
<div class="rh" style="top:546px">18</div>
<div class="cv" style="top:546px">18</div>
<div class="rh" style="top:565px">19</div>
<div class="cv" style="top:565px">19</div>
<div class="rh" style="top:584px">20</div>
<div class="cv" style="top:584px">20</div>
<div class="rh" style="top:603px">21</div>
<div class="cv" style="top:603px">21</div>
<div class="rh" style="top:622px">22</div>
<div class="cv" style="top:622px">22</div>
<div class="rh" style="top:641px">23</div>
<div class="cv" style="top:641px">23</div>
<div class="rh" style="top:660px">24</div>
<div class="cv" style="top:660px">24</div>
<div class="rh" style="top:679px">25</div>
<div class="cv" style="top:679px">25</div>
<div class="rh" style="top:698px">26</div>
<div class="cv" style="top:698px">26</div>
<div class="rh" style="top:717px">27</div>
<div class="cv" style="top:717px">27</div>
<div class="rh" style="top:736px">28</div>
<div class="cv" style="top:736px">28</div>
<div class="rh" style="top:755px">29</div>
<div class="cv" style="top:755px">29</div>
<div class="rh" style="top:774px">30</div>
<div class="cv" style="top:774px">30</div>
<div class="rh" style="top:793px">31</div>
<div class="cv" style="top:793px">31</div>
<div class="rh" style="top:812px">32</div>
<div class="cv" style="top:812px">32</div>
<div class="rh" style="top:831px">33</div>
<div class="cv" style="top:831px">33</div>
<div class="rh" style="top:850px">34</div>
<div class="cv" style="top:850px">34</div>
<div class="rh" style="top:869px">35</div>
<div class="cv" style="top:869px">35</div>
<div class="rh" style="top:888px">36</div>
<div class="cv" style="top:888px">36</div>
<div class="rh" style="top:907px">37</div>
<div class="cv" style="top:907px">37</div>
<div class="rh" style="top:926px">38</div>
<div class="cv" style="top:926px">38</div>
<div class="rh" style="top:945px">39</div>
<div class="cv" style="top:945px">39</div>
<div class="rh" style="top:964px">40</div>
<div class="cv" style="top:964px">40</div>
<div class="rh" style="top:983px">41</div>
<div class="cv" style="top:983px">41</div>
<div class="rh" style="top:1002px">42</div>
<div class="cv" style="top:1002px">42</div>
<div class="rh" style="top:1021px">43</div>
<div class="cv" style="top:1021px">43</div>
<div class="a" style="left:27px;top:221px;width:75px;height:22px;border:2px solid #217346"></div>
<div class="a" style="left:97px;top:238px;width:7px;height:7px;background:#217346;border:1px solid #fff"></div>
<div class="a" style="left:1898px;top:204px;width:22px;height:825px;background:#e6e6e6"></div><div class="a" style="left:1898px;top:222px;width:1px;height:807px;background:#a6a6a6"></div><div class="a" style="left:1902px;top:238px;width:15px;height:778px;background:#e1e1e1"></div>
<div class="a" style="left:1902px;top:206px;width:15px;height:15px;background:#fff;border:1px solid #ababab"></div>
<div class="a" style="left:1906px;top:211px;width:7px;height:4px;background:#666;clip-path:polygon(0 100%,50% 0,100% 100%)"></div>
<div class="a" style="left:1902px;top:220px;width:15px;height:18px;background:#fff;border:1px solid #ababab"></div>
<div class="a" style="left:1902px;top:1015px;width:15px;height:14px;background:#fff;border:1px solid #ababab"></div>
<div class="a" style="left:1906px;top:1021px;width:7px;height:4px;background:#666;clip-path:polygon(0 0,100% 0,50% 100%)"></div>
<!-- ===== sheet tabs ===== -->
<div class="a" style="left:0;top:1029px;width:1920px;height:28px;background:#e6e6e6"></div><div class="a" style="left:0;top:1029px;width:1899px;height:1px;background:#a6a6a6"></div>
<div class="a" style="left:26px;top:1039px;width:0;height:0;border-top:4px solid transparent;border-bottom:4px solid transparent;border-right:4px solid #c0c0c0"></div>
<div class="a" style="left:56px;top:1039px;width:0;height:0;border-top:4px solid transparent;border-bottom:4px solid transparent;border-left:4px solid #c0c0c0"></div>
<div class="a" style="left:100px;top:1029px;width:70px;height:25px;background:#fff;border-bottom:2px solid #217346;border-right:1px solid #ababab;border-left:1px solid #ababab"></div>
<div class="t" style="left:114px;top:1034px;font-size:13px;color:#217346">Sheet1</div>
<div class="t" style="left:182px;top:1034px;font-size:13px">Sheet2</div>
<div class="a" style="left:238px;top:1033px;width:1px;height:19px;background:#ababab"></div>
<div class="t" style="left:251.500px;top:1034px;font-size:13px">Sheet3</div>
<div class="a" style="left:306px;top:1033px;width:1px;height:19px;background:#ababab"></div>
<svg style="left:339px;top:1034px" width="17" height="17" viewBox="0 0 17 17" fill="none" stroke="#666" stroke-width="1.300"><circle cx="8.500" cy="8.500" r="7.500"/><path d="M8.500 4.500v8M4.500 8.500h8" stroke-width="2"/></svg>
<div class="a" style="left:1152px;top:1038px;width:2px;height:2px;background:#a6a6a6;box-shadow:0 4px 0 #a6a6a6,0 8px 0 #a6a6a6"></div>
<div class="a" style="left:1169px;top:1036px;width:15px;height:15px;background:#fff;border:1px solid #ababab"></div>
<div class="a" style="left:1174px;top:1040px;width:4px;height:7px;background:#666;clip-path:polygon(100% 0,0 50%,100% 100%)"></div>
<div class="a" style="left:1184px;top:1036px;width:672px;height:15px;background:#fff;border:1px solid #ababab"></div><div class="a" style="left:1856px;top:1036px;width:28px;height:15px;background:#d8d8d8"></div>
<div class="a" style="left:1884px;top:1036px;width:15px;height:15px;background:#fff;border:1px solid #ababab"></div>
<div class="a" style="left:1890px;top:1040px;width:4px;height:7px;background:#666;clip-path:polygon(0 0,100% 50%,0 100%)"></div>
<!-- ===== status bar ===== -->
<div class="a" style="left:0;top:1057px;width:1920px;height:23px;background:#f1f1f1;border-top:1px solid #d0d0d0"></div>
<div class="t" style="left:8px;top:1060px">就绪</div>
<div class="a" style="left:1623px;top:1058px;width:38px;height:20px;background:#c6c6c6"></div>
<svg style="left:1635px;top:1061px" width="14" height="13" viewBox="0 0 14 13" fill="none" stroke="#6a6a6a" stroke-width="1.400"><path d="M.700 .700h12.600v11.600H.700zM.700 4.500h12.600M.700 8.500h12.600M4.800 .700v11.600M9.200 .700v11.600"/></svg>
<svg style="left:1673px;top:1061px" width="14" height="13" viewBox="0 0 14 13" fill="none" stroke="#6a6a6a"><path d="M.500 .500h13v12h-13zM3.500 2.500h7v8h-7zM5 4.500h4M5 6.500h4M5 8.500h4"/></svg>
<svg style="left:1711px;top:1061px" width="14" height="13" viewBox="0 0 14 13" fill="none" stroke="#6a6a6a"><path d="M.500 .500h13v12h-13zM.500 7.500h8v-7M4.500 .500v7"/></svg>
<div class="a" style="left:1742px;top:1067px;width:6px;height:2px;background:#555"></div>
<div class="a" style="left:1752px;top:1067px;width:100px;height:1px;background:#999"></div>
<div class="a" style="left:1800px;top:1062px;width:4px;height:11px;background:#555"></div>
<div class="a" style="left:1856px;top:1067px;width:8px;height:2px;background:#555"></div>
<div class="a" style="left:1859px;top:1064px;width:2px;height:8px;background:#555"></div>
<div class="t" style="left:1881px;top:1060px;color:#555">100%</div>
<div class="a" style="left:296px;top:1078px;width:48px;height:2px;background:#fbfbfb"></div>
<!-- ===== dialog ===== -->

<div class="a" id="dlg">
<div class="a" style="left:0;top:0;width:305px;height:29px;background:#fff"></div>
<div class="t" style="left:7px;top:6px">序列</div>
<div class="t" style="left:233px;top:6px;font-size:13px">?</div>
<svg style="left:277px;top:9px" width="11" height="11" viewBox="0 0 11 11" fill="none" stroke="#000" stroke-width="1.100"><path d="M.500 .500l10 10M10.500.500l-10 10"/></svg>
<div class="gb" style="left:6px;width:77px"></div>
<div class="gb" style="left:93px;width:102px"></div>
<div class="gb" style="left:205px;width:93px"></div>
<div class="gt" style="left:9px">序列产生在</div>
<div class="gt" style="left:96px">类型</div>
<div class="gt" style="left:208px;color:#6d6d6d">日期单位</div>
<div class="rd on" style="left:15px;top:68px"></div><div class="t" style="left:32px;top:67px">行(<u>R</u>)</div>
<div class="rd" style="left:15px;top:93px"></div><div class="t" style="left:32px;top:92px">列(<u>C</u>)</div>
<div class="rd on" style="left:102px;top:68px"></div><div class="t" style="left:119px;top:67px">等差序列(<u>L</u>)</div>
<div class="rd" style="left:102px;top:93px"></div><div class="t" style="left:119px;top:92px">等比序列(<u>G</u>)</div>
<div class="rd" style="left:102px;top:118px"></div><div class="t" style="left:119px;top:117px">日期(<u>D</u>)</div>
<div class="rd" style="left:102px;top:143px"></div><div class="t" style="left:119px;top:142px">自动填充(<u>F</u>)</div>
<div class="rd dis on" style="left:214px;top:68px"></div><div class="t" style="left:231px;top:67px;color:#6d6d6d">日(A)</div>
<div class="rd dis" style="left:214px;top:93px"></div><div class="t" style="left:231px;top:92px;color:#6d6d6d">工作日(W)</div>
<div class="rd dis" style="left:214px;top:118px"></div><div class="t" style="left:231px;top:117px;color:#6d6d6d">月(M)</div>
<div class="rd dis" style="left:214px;top:143px"></div><div class="t" style="left:231px;top:142px;color:#6d6d6d">年(Y)</div>
<div class="a" style="left:6px;top:185px;width:13px;height:13px;background:#fff;border:1px solid #333"></div>
<div class="t" style="left:23px;top:183px">预测趋势(<u>T</u>)</div>
<div class="t" style="left:6px;top:217px">步长值(<u>S</u>):</div>
<div class="a" style="left:69px;top:212px;width:78px;height:26px;background:#fff;border:1px solid #adadad"></div>
<div class="t" style="left:74px;top:216px">1</div>
<div class="t" style="left:156px;top:217px">终止值(<u>O</u>):</div>
<div class="a" style="left:222px;top:212px;width:77px;height:26px;background:#fff;border:1px solid #adadad"></div>
<div class="t" style="left:226px;top:216px">300</div>
<div class="a" style="left:140px;top:249px;width:74px;height:29px;background:#e1e1e1;border:2px solid #0078d7"></div>
<div class="t c" style="left:140px;top:256px;width:74px">确定</div>
<div class="a" style="left:224px;top:249px;width:74px;height:29px;background:#e1e1e1;border:1px solid #adadad"></div>
<div class="t c" style="left:224px;top:256px;width:74px">取消</div>
</div>
<!-- ===== floating widget ===== -->
<div class="a" style="left:1781px;top:817px;width:110px;height:44px;border-radius:22px;background:#3b3e48;box-shadow:0 1px 5px rgba(0,0,0,.35)"></div>
<div class="a" style="left:1842px;top:809px;width:58px;height:58px;border-radius:50%;background:#5b5f6c;box-shadow:0 1px 6px rgba(0,0,0,.4)"></div>
<svg style="left:1842px;top:809px" width="58" height="58" viewBox="0 0 58 58" fill="none"><path d="M29 4.500A24.500 24.500 0 0 1 53.500 29" stroke="#5ed2c3" stroke-width="2.200" stroke-linecap="round"/></svg>
<div class="t" style="left:1853px;top:826px;font-size:22px;line-height:24px;height:24px;color:#fff;letter-spacing:1px">28</div>
<svg style="left:1792px;top:824px" width="8" height="7" viewBox="0 0 8 7" fill="none" stroke="#3fa9f5" stroke-width="1.500"><path d="M4 7V1M1 4l3-3 3 3"/></svg>
<div class="t" style="left:1805px;top:820px;color:#fff;font-size:11px">1.6<span style="font-size:9px;color:#d8d8d8">K/s</span></div>
<svg style="left:1792px;top:844px" width="8" height="8" viewBox="0 0 8 8" fill="none" stroke="#3cc14c" stroke-width="1.500"><path d="M4 0v7M1 4l3 3 3-3"/></svg>
<div class="a" style="left:1835px;top:837px;width:76px;height:24px;background:#393939;border-radius:0 4px 4px 0"></div>
<div class="t" style="left:1805px;top:835px;font-size:26px;line-height:28px;height:28px;color:#1e9fe8">中</div>
<div class="t" style="left:1837px;top:838px;font-size:18px;line-height:20px;height:20px;color:#f0f0f0">°,</div>
<div class="t" style="left:1859px;top:839px;font-size:18px;line-height:20px;height:20px;color:#f0f0f0">半</div>
<svg style="left:1883px;top:840px" width="22" height="18" viewBox="0 0 22 18"><path d="M7 0c1 2 7 2 8 0l7 4-3 5-2.500-1.500V18h-11V7.500L3 9 0 4z" fill="#cfcfcf"/></svg>
</body></html>
